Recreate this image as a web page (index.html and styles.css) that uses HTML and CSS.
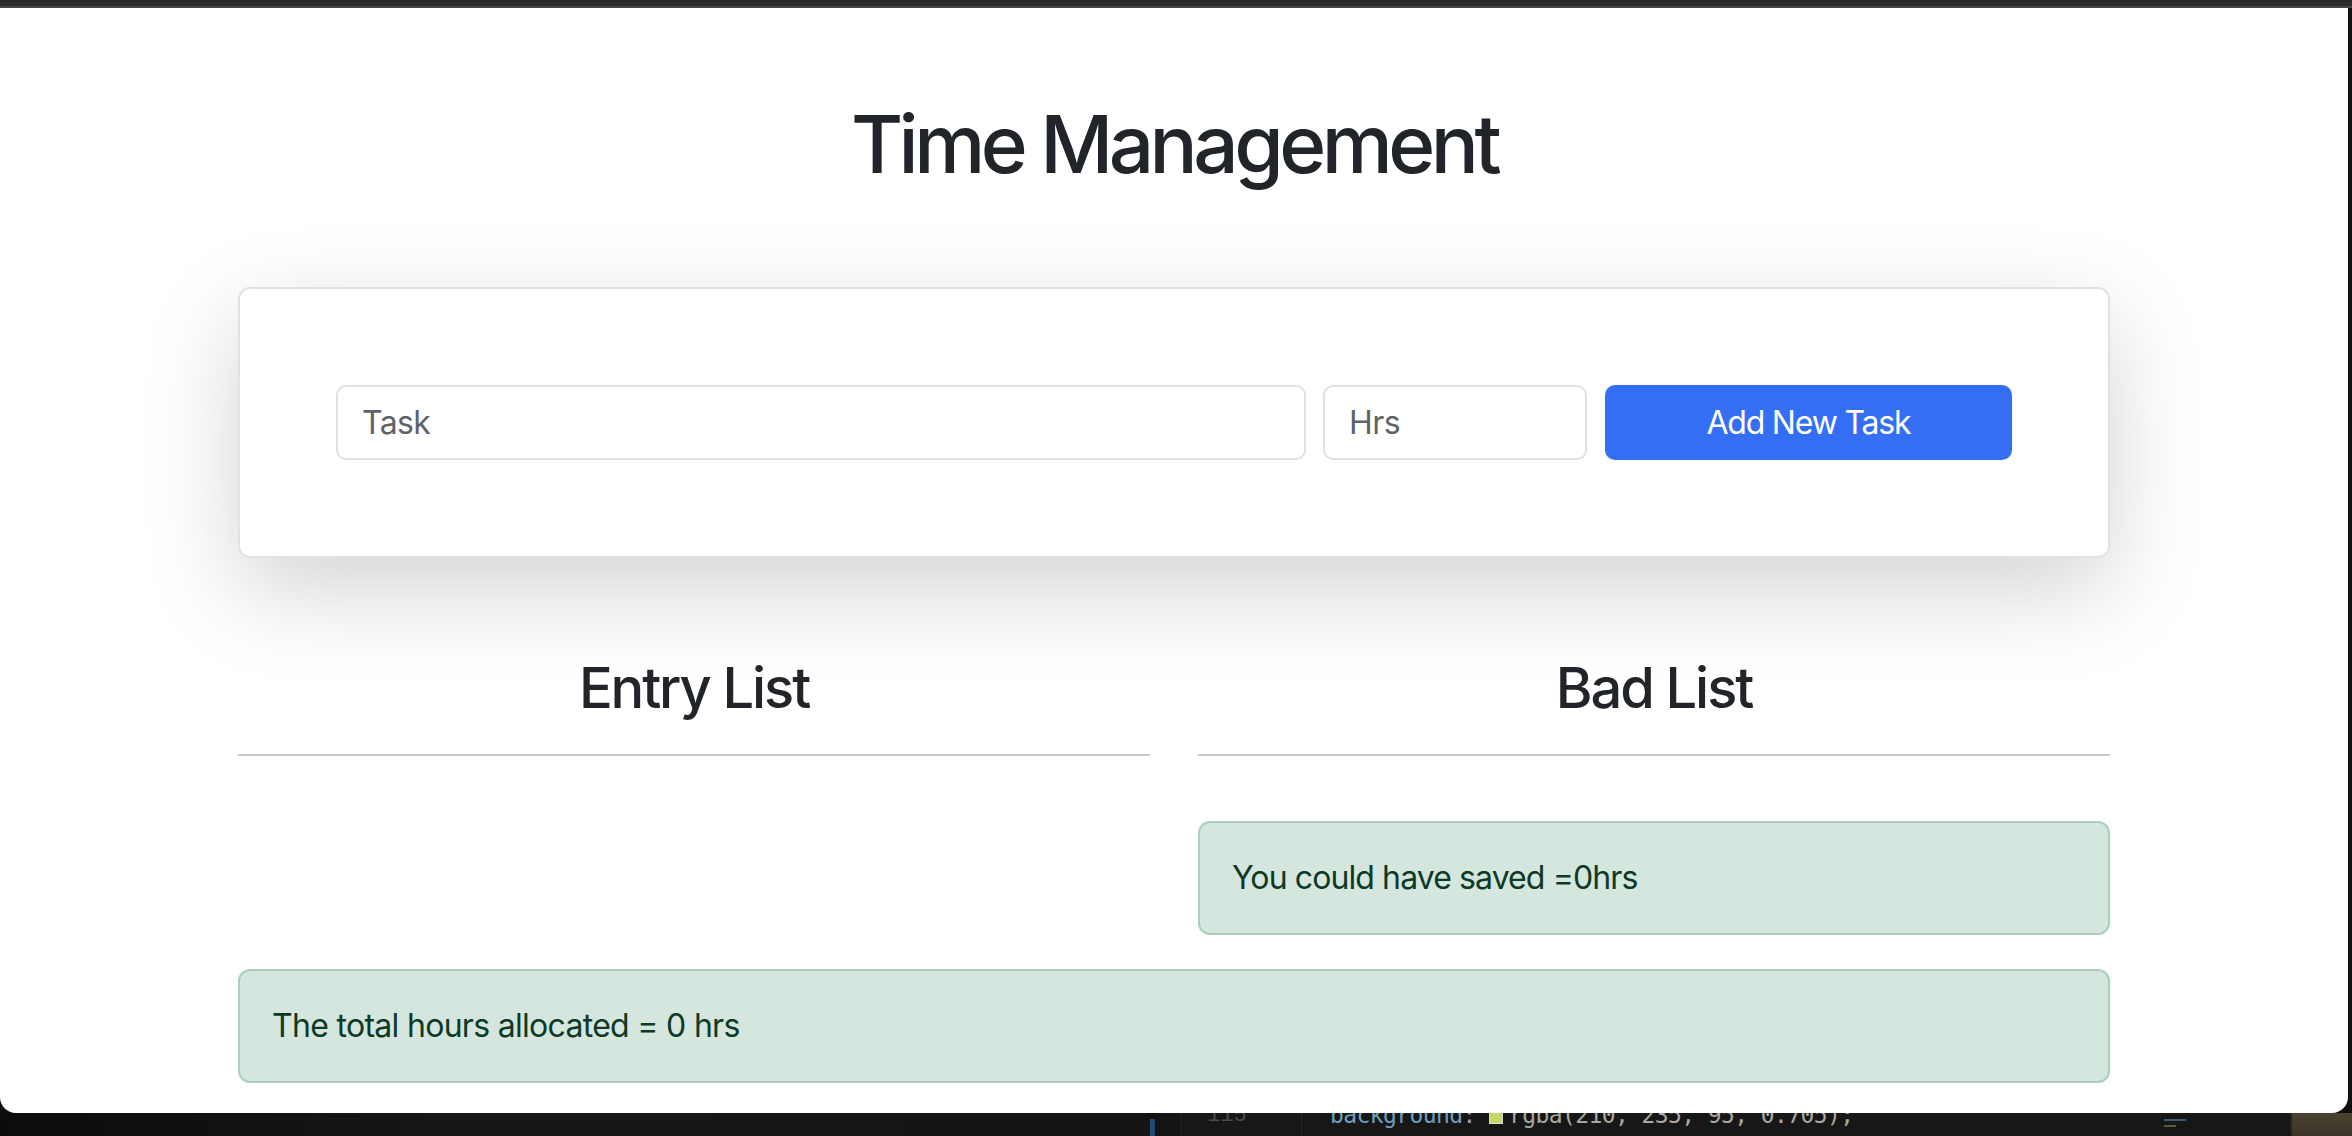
FILE: index.html
```html
<!DOCTYPE html>
<html lang="en">
<head>
<meta charset="utf-8">
<title>Time Management</title>
<link rel="stylesheet" href="styles.css">
</head>
<body>
<div class="screen">
  <div class="topbar"></div>
  <div class="window">
    <div class="container">
      <h1 class="title">Time Management</h1>
      <div class="card">
        <form class="task-form">
          <input class="field" type="text" placeholder="Task">
          <input class="field" type="number" placeholder="Hrs">
          <button class="btn" type="button">Add New Task</button>
        </form>
      </div>
      <div class="lists">
        <section class="list">
          <h3 class="list-title">Entry List</h3>
          <hr class="rule">
        </section>
        <section class="list">
          <h3 class="list-title">Bad List</h3>
          <hr class="rule">
          <div class="alert saved">You could have saved =0hrs</div>
        </section>
      </div>
      <div class="alert total">The total hours allocated = 0 hrs</div>
    </div>
  </div>
  <div class="dock">
    <div class="dock-left"></div>
    <div class="dock-accent"></div>
    <div class="dock-gap"></div>
    <div class="gutter"><span class="lineno">115</span></div>
    <div class="code"><span class="code-line"><span class="prop">background</span><span class="punc">:</span> <span class="swatch"></span><span class="val">rgba(210, 235, 95, 0.705);</span></span></div>
    <div class="minimap"><span class="mini"></span><span class="mini short"></span></div>
    <div class="wallpaper"></div>
  </div>
</div>
</body>
</html>
```

FILE: styles.css
```css
* { box-sizing: border-box; }

html, body {
  margin: 0;
  padding: 0;
}

body {
  background: #101010;
  font-family: Inter, "Noto Sans", "Liberation Sans", sans-serif;
  color: #212529;
  overflow: hidden;
}

.screen {
  width: 2352px;
  height: 1136px;
  display: flex;
  flex-direction: column;
}

.topbar {
  height: 8px;
  background: #2b2b2b;
  border-bottom: 2px solid #474747;
  flex: none;
}

.window {
  height: 1105px;
  width: 2348px;
  background: #ffffff;
  border-radius: 0 0 16px 16px;
  padding-top: 88px;
  overflow: hidden;
  flex: none;
  position: relative;
  z-index: 1;
}

.container {
  width: 1920px;
  margin: 0 auto;
  padding: 0 24px;
}

.title {
  margin: 0;
  font-size: 80px;
  line-height: 96px;
  font-weight: 500;
  text-align: center;
  letter-spacing: -4.5px;
}

.card {
  margin-top: 95px;
  border: 2px solid #dfe2e6;
  border-radius: 12px;
  padding: 96px;
  background: #fff;
  box-shadow: 0 32px 96px rgba(0, 0, 0, 0.175);
}

.task-form {
  display: grid;
  grid-template-columns: 969fr 264fr 407fr;
  gap: 17.5px;
  margin: 0;
}

.field {
  height: 75px;
  border: 2px solid #dee2e6;
  border-radius: 10px;
  padding: 0 24px;
  font-family: inherit;
  font-size: 32px;
  color: #212529;
  background: #fff;
  outline: none;
  letter-spacing: -0.6px;
  min-width: 0;
  -moz-appearance: textfield;
}

.field::placeholder {
  color: #5f6367;
}

.btn {
  height: 75px;
  border: 0;
  border-radius: 10px;
  background: #336ef5;
  color: #ffffff;
  font-family: inherit;
  font-size: 32px;
  letter-spacing: -1.2px;
  cursor: pointer;
}

.lists {
  margin-top: 97px;
  display: grid;
  grid-template-columns: 1fr 1fr;
  column-gap: 48px;
  align-items: start;
}

.list-title {
  margin: 0;
  font-size: 56px;
  line-height: 67px;
  font-weight: 500;
  text-align: center;
  letter-spacing: -2.1px;
}

.rule {
  margin: 32px 0 0;
  border: 0;
  height: 2px;
  background: #c8c9ca;
}

.alert {
  border: 2px solid #a9d0bd;
  border-radius: 12px;
  background: #d4e6de;
  color: #0d3a25;
  padding: 31px 32px;
  font-size: 32px;
  line-height: 48px;
  letter-spacing: -0.9px;
}

.alert.saved {
  margin-top: 65px;
}

.alert.total {
  margin-top: 34px;
  letter-spacing: -0.7px;
}

/* desktop strip below the browser window */
.dock {
  flex: 1;
  display: flex;
  overflow: hidden;
  background: #121212;
}

.dock-left {
  width: 1150px;
  background: linear-gradient(90deg, #0c0c0c, #161616 40%, #141414);
}

.dock-accent {
  width: 5px;
  margin-top: 6px;
  background: #1f4b70;
}

.dock-gap {
  width: 25px;
  background: #131313;
}

.gutter {
  width: 122px;
  background: #171717;
  border-left: 1px solid #222;
  border-right: 1px solid #262626;
  overflow: hidden;
}

.lineno {
  display: block;
  margin: -12px 0 0 26px;
  font-family: "Liberation Mono", monospace;
  font-size: 22px;
  line-height: 30px;
  color: #4a4a4a;
}

.code {
  flex: 1;
  background: #171717;
  overflow: hidden;
  padding-left: 28px;
}

.code-line {
  display: block;
  margin-top: -13px;
  font-family: "DejaVu Sans Mono", "Liberation Mono", monospace;
  font-size: 23px;
  line-height: 30px;
  white-space: nowrap;
  letter-spacing: -0.6px;
}

.prop { color: #6f9fc0; }
.punc { color: #9a9a9a; }
.val { color: #a8a8a0; }

.swatch {
  display: inline-block;
  width: 14px;
  height: 14px;
  margin-right: 6px;
  background: #c7d86a;
  border: 1px solid #ddd;
  vertical-align: -1px;
}

.minimap {
  width: 140px;
  background: #171717;
  display: flex;
  flex-direction: column;
  gap: 4px;
  padding: 6px 0 0 14px;
}

.mini {
  display: block;
  width: 22px;
  height: 2px;
  background: #3c5a70;
}

.mini.short { width: 12px; background: #5a5a3c; }

.wallpaper {
  width: 62px;
  background: linear-gradient(180deg, #4c4232, #3a3428);
  border-left: 2px solid #222;
}
```
